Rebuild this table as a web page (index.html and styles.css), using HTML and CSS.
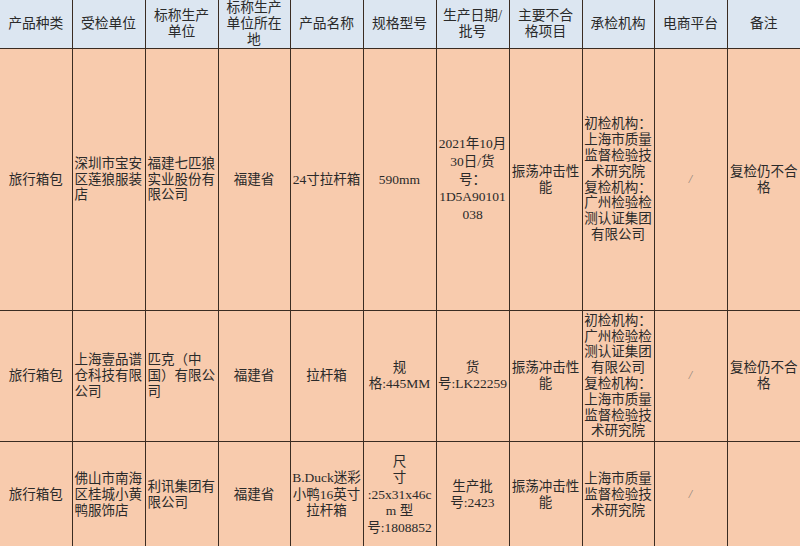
FILE: index.html
```html
<!DOCTYPE html>
<html lang="zh-CN">
<head>
<meta charset="utf-8">
<title>产品抽检结果</title>
<link rel="stylesheet" href="styles.css">
</head>
<body>
<table class="grid">
  <colgroup>
    <col class="c72"><col class="c73"><col class="c73"><col class="c72"><col class="c73"><col class="c73"><col class="c73"><col class="c73"><col class="c72"><col class="c73"><col class="c73">
  </colgroup>
  <thead>
    <tr class="head">
      <th>产品种类</th>
      <th>受检单位</th>
      <th>标称生产<br>单位</th>
      <th>标称生产<br>单位所在<br>地</th>
      <th>产品名称</th>
      <th>规格型号</th>
      <th>生产日期/<br>批号</th>
      <th>主要不合<br>格项目</th>
      <th>承检机构</th>
      <th>电商平台</th>
      <th>备注</th>
    </tr>
  </thead>
  <tbody>
    <tr class="r1">
      <td>旅行箱包</td>
      <td class="left">深圳市宝安<br>区莲狼服装<br>店</td>
      <td class="left">福建七匹狼<br>实业股份有<br>限公司</td>
      <td>福建省</td>
      <td>24寸拉杆箱</td>
      <td>590mm</td>
      <td class="tall">2021年10月<br>30日/货<br>号：<br>1D5A90101<br>038</td>
      <td>振荡冲击性<br>能</td>
      <td>初检机构：<br>上海市质量<br>监督检验技<br>术研究院<br>复检机构：<br>广州检验检<br>测认证集团<br>有限公司</td>
      <td class="na">/</td>
      <td>复检仍不合<br>格</td>
    </tr>
    <tr class="r2">
      <td>旅行箱包</td>
      <td class="left">上海壹品谱<br>仓科技有限<br>公司</td>
      <td class="left">匹克（中<br>国）有限公<br>司</td>
      <td>福建省</td>
      <td>拉杆箱</td>
      <td>规<br>格:445MM</td>
      <td>货<br>号:LK22259</td>
      <td>振荡冲击性<br>能</td>
      <td>初检机构：<br>广州检验检<br>测认证集团<br>有限公司<br>复检机构：<br>上海市质量<br>监督检验技<br>术研究院</td>
      <td class="na">/</td>
      <td>复检仍不合<br>格</td>
    </tr>
    <tr class="r3">
      <td>旅行箱包</td>
      <td class="left">佛山市南海<br>区桂城小黄<br>鸭服饰店</td>
      <td class="left">利讯集团有<br>限公司</td>
      <td>福建省</td>
      <td class="mid">B.Duck迷彩<br>小鸭16英寸<br>拉杆箱</td>
      <td class="mid">尺<br>寸<br>:25x31x46c<br>m 型<br>号:1808852</td>
      <td>生产批<br>号:2423</td>
      <td>振荡冲击性<br>能</td>
      <td>上海市质量<br>监督检验技<br>术研究院</td>
      <td class="na">/</td>
      <td></td>
    </tr>
  </tbody>
</table>
</body>
</html>
```
FILE: styles.css
```css
html, body {
  margin: 0;
  padding: 0;
  background: #f8cbad;
}

.grid {
  width: 800px;
  table-layout: fixed;
  border-collapse: collapse;
  font-family: "Liberation Serif", "Noto Sans CJK SC", serif;
  font-size: 13.5px;
  line-height: 15.8px;
  color: #2a2a2a;
}

.c72 { width: 72px; }
.c73 { width: 73px; }

.grid th,
.grid td {
  border: 1.5px solid #3a2c22;
  padding: 0 1px;
  text-align: center;
  vertical-align: middle;
  overflow: hidden;
  white-space: nowrap;
}

.grid tr > :first-child { border-left: none; }
.grid tr > :last-child { border-right: none; }
.grid thead th { border-top: none; }

.head th {
  background: #dce6f1;
  font-weight: normal;
  font-size: 13.8px;
  line-height: 16px;
  height: 48px;
}

.grid td { background: #f8cbad; }

.r1 td { height: 261px; }
.r2 td { height: 130px; }
.r3 td { height: 106px; }

.grid td.left {
  text-align: left;
  padding-left: 2px;
}

.grid td.tall { line-height: 17.8px; }
.grid td.mid { line-height: 16.6px; }

.grid td.na {
  color: #8a7f78;
  font-style: italic;
  font-size: 12px;
}
```
